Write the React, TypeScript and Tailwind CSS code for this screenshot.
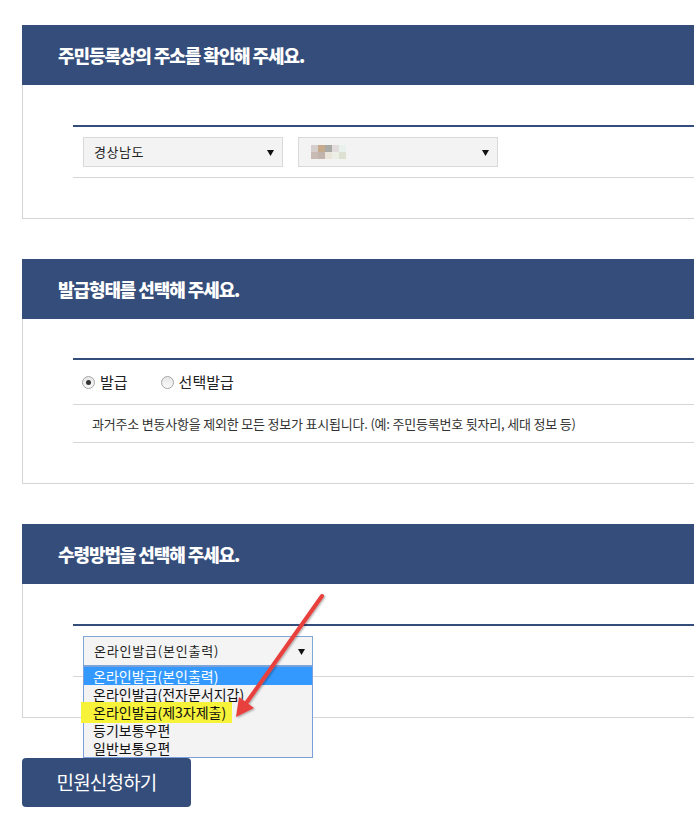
import React from "react";

const NAVY = "bg-[#344d7a]";

function Arrow() {
  return (
    <svg width="7" height="7" viewBox="0 0 7 7" className="shrink-0">
      <path d="M0 1 L7 1 L3.5 7 Z" fill="#111" />
    </svg>
  );
}

function Header({ title }: { title: string }) {
  return (
    <div className={`h-[60px] ${NAVY} flex items-center pl-[36px] text-white font-black text-[18px] tracking-[-1.1px]`}>
      {title}
    </div>
  );
}

function Radio({ checked }: { checked?: boolean }) {
  return (
    <span className="w-[13px] h-[13px] rounded-full border border-[#a6a6a6] bg-gradient-to-b from-[#e6e6e6] to-[#fafafa] flex items-center justify-center">
      {checked && <span className="w-[5px] h-[5px] rounded-full bg-[#333]" />}
    </span>
  );
}

export default function App() {
  const mosaic = [
    ["#d6cdcd", "#c7a98c", "#a9aaa5", "#e3dcdc", "#e9f1ed"],
    ["#c9bab3", "#c2b3ad", "#e9e5d8", "#edefe6", "#dde1d2"],
  ];
  return (
    <div
      className="relative w-[694px] h-[830px] overflow-hidden bg-white text-[#222]"
      style={{ fontFamily: '"Noto Sans CJK KR", "Noto Sans", sans-serif' }}
    >
      <div className="pl-[22px] pt-[25px] w-[760px]">
        {/* Section 1 */}
        <section>
          <Header title="주민등록상의 주소를 확인해 주세요." />
          <div className="border-l border-b border-[#d4d4d4] pl-[50px] pt-[40px] pb-[40px]">
            <div className="border-t-2 border-[#344d7a]">
              <div className="flex gap-[15px] pl-[10px] py-[10px] border-b border-[#d6d6d6]">
                <div className="w-[200px] h-[30px] bg-[#f3f3f3] border border-[#d9d9d9] flex items-center justify-between pl-[10px] pr-[8px] text-[13px] tracking-[0.5px]">
                  <span>경상남도</span>
                  <Arrow />
                </div>
                <div className="w-[200px] h-[30px] bg-[#f3f3f3] border border-[#d9d9d9] flex items-center justify-between pl-[12px] pr-[8px]">
                  <div className="flex flex-col">
                    {mosaic.map((row, i) => (
                      <div key={i} className="flex">
                        {row.map((c, j) => (
                          <span key={j} className="w-[7px] h-[7px]" style={{ background: c }} />
                        ))}
                      </div>
                    ))}
                  </div>
                  <Arrow />
                </div>
              </div>
            </div>
          </div>
        </section>

        {/* Section 2 */}
        <section className="mt-[40px]">
          <Header title="발급형태를 선택해 주세요." />
          <div className="border-l border-b border-[#d4d4d4] pl-[50px] pt-[39px] pb-[40px]">
            <div className="border-t-2 border-[#344d7a]">
              <div className="h-[45px] flex items-center pl-[9px] border-b border-[#d6d6d6] text-[15px]">
                <Radio checked />
                <span className="ml-[5px]">발급</span>
                <span className="ml-[33px]"><Radio /></span>
                <span className="ml-[5px]">선택발급</span>
              </div>
              <div className="h-[38px] flex items-center pl-[19px] border-b border-[#d6d6d6] text-[13px] tracking-[-0.2px] text-[#333]">
                과거주소 변동사항을 제외한 모든 정보가 표시됩니다. (예: 주민등록번호 뒷자리, 세대 정보 등)
              </div>
            </div>
          </div>
        </section>

        {/* Section 3 */}
        <section className="mt-[40px]">
          <Header title="수령방법을 선택해 주세요." />
          <div className="border-l border-b border-[#d4d4d4] pl-[50px] pt-[40px] pb-[40px]">
            <div className="border-t-2 border-[#344d7a]">
              <div className="pl-[10px] py-[10px] border-b border-[#d6d6d6]">
                <div className="relative w-[230px] h-[30px]">
                  <div className="w-full h-full bg-[#f4f4f4] border border-[#7fa6d8] flex items-center justify-between pl-[10px] pr-[7px] text-[13px] tracking-[0.8px]">
                    <span>온라인발급(본인출력)</span>
                    <Arrow />
                  </div>
                  <div className="absolute left-0 top-[30px] w-[230px] z-10 bg-[#f3f3f3] border border-[#7d9fd9] text-[14px] leading-[18px] text-[#111]">
                    <div className="h-[18px] pl-[9px] bg-[#3399ff] text-white">온라인발급(본인출력)</div>
                    <div className="h-[18px] pl-[9px]">온라인발급(전자문서지갑)</div>
                    <div className="relative h-[18px] pl-[9px]">
                      <span className="absolute left-[-3px] top-[-1px] w-[151px] h-[21px] bg-[#f7f23a]" />
                      <span className="relative">온라인발급(제3자제출)</span>
                    </div>
                    <div className="relative h-[18px] pl-[9px]">등기보통우편</div>
                    <div className="h-[18px] pl-[9px]">일반보통우편</div>
                  </div>
                </div>
              </div>
            </div>
          </div>
        </section>

        <button className={`mt-[40px] w-[169px] h-[49px] rounded-[4px] ${NAVY} text-white text-[19px] flex items-center justify-center tracking-[-0.8px]`}>
          민원신청하기
        </button>
      </div>

      {/* Red annotation arrow */}
      <svg className="absolute left-0 top-0 z-20 pointer-events-none" width="694" height="830">
        <defs>
          <filter id="sh" x="-20%" y="-20%" width="140%" height="140%">
            <feDropShadow dx="1" dy="1" stdDeviation="1" floodColor="#000" floodOpacity="0.35" />
          </filter>
        </defs>
        <g filter="url(#sh)">
          <line x1="322" y1="596" x2="247" y2="702" stroke="#e8403e" strokeWidth="4" strokeLinecap="round" />
          <polygon points="236,717 239,697 254,708" fill="#e8403e" />
        </g>
      </svg>
    </div>
  );
}
